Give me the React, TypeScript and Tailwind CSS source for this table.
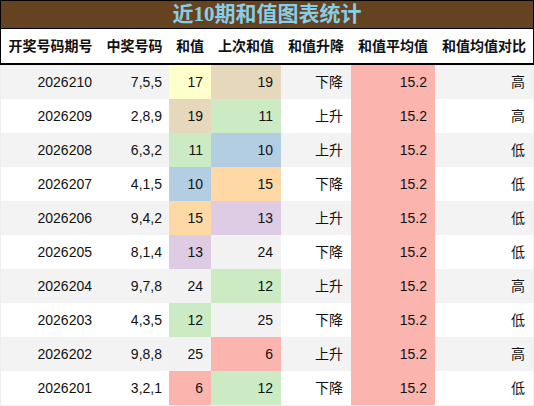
import React from 'react';

type Row = {
  issue: string;
  nums: string;
  sum: number;
  prev: number;
  trend: string;
  cmp: string;
};

const rows: Row[] = [
  { issue: '2026210', nums: '7,5,5', sum: 17, prev: 19, trend: '下降', cmp: '高' },
  { issue: '2026209', nums: '2,8,9', sum: 19, prev: 11, trend: '上升', cmp: '高' },
  { issue: '2026208', nums: '6,3,2', sum: 11, prev: 10, trend: '上升', cmp: '低' },
  { issue: '2026207', nums: '4,1,5', sum: 10, prev: 15, trend: '下降', cmp: '低' },
  { issue: '2026206', nums: '9,4,2', sum: 15, prev: 13, trend: '上升', cmp: '低' },
  { issue: '2026205', nums: '8,1,4', sum: 13, prev: 24, trend: '下降', cmp: '低' },
  { issue: '2026204', nums: '9,7,8', sum: 24, prev: 12, trend: '上升', cmp: '高' },
  { issue: '2026203', nums: '4,3,5', sum: 12, prev: 25, trend: '下降', cmp: '低' },
  { issue: '2026202', nums: '9,8,8', sum: 25, prev: 6, trend: '上升', cmp: '高' },
  { issue: '2026201', nums: '3,2,1', sum: 6, prev: 12, trend: '下降', cmp: '低' },
];

// pastel palette keyed by sum value
const sumColor: Record<number, string> = {
  6: 'bg-[#fbb4ae]',
  10: 'bg-[#b3cde3]',
  11: 'bg-[#ccebc5]',
  12: 'bg-[#ccebc5]',
  13: 'bg-[#decbe4]',
  15: 'bg-[#fed9a6]',
  17: 'bg-[#ffffcc]',
  19: 'bg-[#e5d8bd]',
  24: 'bg-[#f2f2f2]',
  25: 'bg-[#f2f2f2]',
};

const cols = 'grid grid-cols-[99px_69px_42px_70px_70px_84px_98px]';
const headers = ['开奖号码期号', '中奖号码', '和值', '上次和值', '和值升降', '和值平均值', '和值均值对比'];

const App: React.FC = () => {
  return (
    <div
      className="w-[534px] h-[406px] bg-white text-[14px] text-[#111]"
      style={{ fontFamily: '"Liberation Sans", "Noto Sans CJK SC", sans-serif' }}
    >
      <div
        className="h-[29px] border border-black bg-[#654321] flex items-center justify-center text-[21px] font-bold text-[#87ceeb] leading-none"
        style={{ fontFamily: '"Liberation Serif", "Noto Sans CJK SC", serif' }}
      >
        近10期和值图表统计
      </div>
      <div className={`${cols} h-[36px] border-x border-b-2 border-black font-bold`}>
        {headers.map((h) => (
          <div key={h} className="flex items-center justify-center whitespace-nowrap">
            {h}
          </div>
        ))}
      </div>
      <div className="border-x border-b border-[#eeeeee]">
        {rows.map((r, i) => (
          <div
            key={r.issue}
            className={`${cols} h-[34px] ${i % 2 === 0 ? 'bg-[#f3f3f3]' : 'bg-white'}`}
          >
            <div className="flex items-center justify-end pr-2">{r.issue}</div>
            <div className="flex items-center justify-end pr-[7px]">{r.nums}</div>
            <div className={`flex items-center justify-end pr-2 ${sumColor[r.sum]}`}>{r.sum}</div>
            <div className={`flex items-center justify-end pr-2 ${sumColor[r.prev]}`}>{r.prev}</div>
            <div className="flex items-center justify-end pr-2">{r.trend}</div>
            <div className="flex items-center justify-end pr-2 bg-[#fbb4ae]">15.2</div>
            <div className="flex items-center justify-end pr-2">{r.cmp}</div>
          </div>
        ))}
      </div>
    </div>
  );
};

export default App;
